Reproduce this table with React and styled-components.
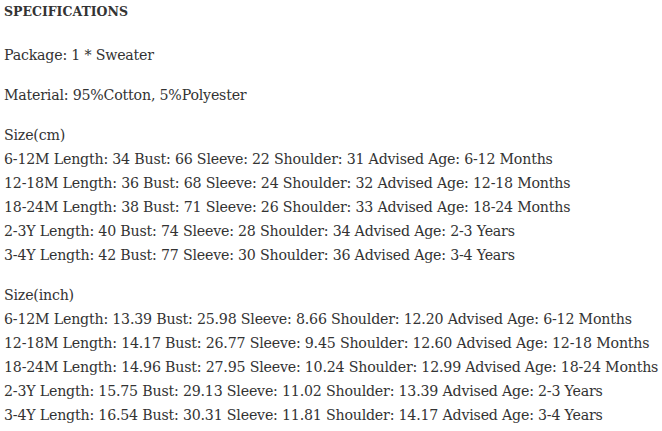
import styled, { createGlobalStyle } from "styled-components";

const GlobalStyle = createGlobalStyle`
  body {
    margin: 0;
    background: #fff;
  }
`;

const Page = styled.div`
  padding: 0 4px;
  color: #333;
  font-family: "DejaVu Serif", "Liberation Serif", serif;
  font-size: 14.2px;
  letter-spacing: -0.2px;
  line-height: 24px;
`;

const Heading = styled.h4`
  margin: 0;
  padding-top: 1px;
  font-size: 12.5px;
  font-weight: bold;
  letter-spacing: 0;
  line-height: 22px;
`;

const Para = styled.p`
  margin: ${(p) => (p.$first ? "20px" : "16px")} 0 0;
  white-space: nowrap;
`;

const Line = styled.div`
  white-space: nowrap;
`;

const cm = [
  ["6-12M", "34", "66", "22", "31", "6-12 Months"],
  ["12-18M", "36", "68", "24", "32", "12-18 Months"],
  ["18-24M", "38", "71", "26", "33", "18-24 Months"],
  ["2-3Y", "40", "74", "28", "34", "2-3 Years"],
  ["3-4Y", "42", "77", "30", "36", "3-4 Years"],
];

const inch = [
  ["6-12M", "13.39", "25.98", "8.66", "12.20", "6-12 Months"],
  ["12-18M", "14.17", "26.77", "9.45", "12.60", "12-18 Months"],
  ["18-24M", "14.96", "27.95", "10.24", "12.99", "18-24 Months"],
  ["2-3Y", "15.75", "29.13", "11.02", "13.39", "2-3 Years"],
  ["3-4Y", "16.54", "30.31", "11.81", "14.17", "3-4 Years"],
];

function SizeTable({ title, rows }) {
  return (
    <Para>
      {title}
      {rows.map(([size, len, bust, sleeve, shoulder, age]) => (
        <Line key={size}>
          {size} Length: {len} Bust: {bust} Sleeve: {sleeve} Shoulder: {shoulder} Advised Age: {age}
        </Line>
      ))}
    </Para>
  );
}

export default function App() {
  return (
    <>
      <GlobalStyle />
      <Page>
        <Heading>SPECIFICATIONS</Heading>
        <Para $first>Package: 1 * Sweater</Para>
        <Para>Material: 95%Cotton, 5%Polyester</Para>
        <SizeTable title="Size(cm)" rows={cm} />
        <SizeTable title="Size(inch)" rows={inch} />
      </Page>
    </>
  );
}
